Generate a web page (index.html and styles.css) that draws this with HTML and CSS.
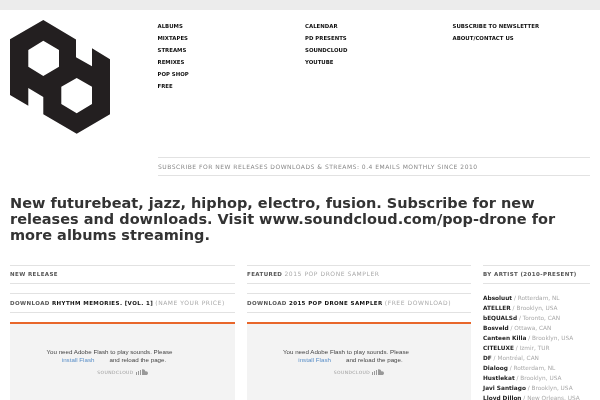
FILE: index.html
```html
<!DOCTYPE html>
<html lang="en">
<head>
<meta charset="utf-8">
<title>Pop Drone</title>
<link rel="stylesheet" href="styles.css">
</head>
<body>
<div class="topbar"></div>
<div class="page">
  <header class="header">
    <svg class="logo" width="100" height="114" viewBox="10 20 100 114" aria-label="Pop Drone logo">
      <path fill="#231f20" fill-rule="evenodd" d="M43.300 20 76 39.500V57.300L92 66.300V48.300L110 59.300V114.300L76.700 133.700 43.300 114.300V97L28.300 88V105.700L10 95V39.300ZM43.300 40.700 28.300 50V66.700L43.300 76 59 66.700V50ZM76.700 78 61.300 86.700V104L76.700 113.300 92 104V86.700Z"/>
    </svg>
    <div class="header-main">
      <nav class="nav">
        <ul class="nav-list">
          <li>ALBUMS</li><li>MIXTAPES</li><li>STREAMS</li><li>REMIXES</li><li>POP SHOP</li><li>FREE</li>
        </ul>
        <ul class="nav-list">
          <li>CALENDAR</li><li>PD PRESENTS</li><li>SOUNDCLOUD</li><li>YOUTUBE</li>
        </ul>
        <ul class="nav-list">
          <li>SUBSCRIBE TO NEWSLETTER</li><li>ABOUT/CONTACT US</li>
        </ul>
      </nav>
      <p class="subscribe">SUBSCRIBE FOR NEW RELEASES DOWNLOADS &amp; STREAMS: 0.4 EMAILS MONTHLY SINCE 2010</p>
    </div>
  </header>
  <h1 class="headline">New futurebeat, jazz, hiphop, electro, fusion. Subscribe for new releases and downloads. Visit www.soundcloud.com/pop-drone for more albums streaming.</h1>
  <main class="columns">
    <section class="col">
      <h2 class="bar"><span class="mid">NEW RELEASE</span></h2>
      <h2 class="bar bar-tall"><span class="mid">DOWNLOAD</span> <b>RHYTHM MEMORIES. [VOL. 1]</b> <span class="soft">(NAME YOUR PRICE)</span></h2>
      <div class="player">
        <p class="flash">You need Adobe Flash to play sounds. Please<br><a class="flash-link">install Flash</a>and reload the page.</p>
        <p class="sc">SOUNDCLOUD
          <svg class="sc-icon" width="12" height="6" viewBox="0 0 12 6"><path fill="#999" d="M0 3h1v3H0zM2 2h1v4H2zM4 1h1v5H4zM6 0.500C8 0 9 1 9.300 2.400 11 2 12 3 12 4.200 12 5.400 11 6 10.500 6H6z"/></svg>
        </p>
      </div>
    </section>
    <section class="col">
      <h2 class="bar"><span class="mid">FEATURED</span> <span class="soft">2015 POP DRONE SAMPLER</span></h2>
      <h2 class="bar bar-tall"><span class="mid">DOWNLOAD</span> <b>2015 POP DRONE SAMPLER</b> <span class="soft">(FREE DOWNLOAD)</span></h2>
      <div class="player">
        <p class="flash">You need Adobe Flash to play sounds. Please<br><a class="flash-link">install Flash</a>and reload the page.</p>
        <p class="sc">SOUNDCLOUD
          <svg class="sc-icon" width="12" height="6" viewBox="0 0 12 6"><path fill="#999" d="M0 3h1v3H0zM2 2h1v4H2zM4 1h1v5H4zM6 0.500C8 0 9 1 9.300 2.400 11 2 12 3 12 4.200 12 5.400 11 6 10.500 6H6z"/></svg>
        </p>
      </div>
    </section>
    <aside class="col">
      <h2 class="bar"><span class="mid">BY ARTIST (2010-PRESENT)</span></h2>
      <ul class="artists">
        <li><b>Absoluut</b> / Rotterdam, NL</li>
        <li><b>ATELLER</b> / Brooklyn, USA</li>
        <li><b>bEQUALSd</b> / Toronto, CAN</li>
        <li><b>Bosveld</b> / Ottawa, CAN</li>
        <li><b>Canteen Killa</b> / Brooklyn, USA</li>
        <li><b>CITELUXE</b> / Izmir, TUR</li>
        <li><b>DF</b> / Montréal, CAN</li>
        <li><b>Dialoog</b> / Rotterdam, NL</li>
        <li><b>Hustlekat</b> / Brooklyn, USA</li>
        <li><b>Javi Santiago</b> / Brooklyn, USA</li>
        <li><b>Lloyd Dillon</b> / New Orleans, USA</li>
      </ul>
    </aside>
  </main>
</div>
</body>
</html>
```
FILE: styles.css
```css
* { box-sizing: border-box; }
html, body { margin: 0; height: 400px; overflow: hidden; background: #fff; }
body { font-family: "DejaVu Sans", sans-serif; color: #222; }
ul, p, h1, h2 { margin: 0; padding: 0; list-style: none; font-weight: normal; }
.topbar { height: 10px; background: #ececec; }
.page { padding: 0 10px; height: 390px; overflow: hidden; filter: blur(0.25px); }
.header { display: flex; height: 166px; padding-top: 10px; }
.logo { display: block; margin-right: 47.500px; flex: none; }
.header-main { flex: 1; display: flex; flex-direction: column; justify-content: space-between; }
.nav { display: grid; grid-template-columns: 147.500px 147.500px 1fr; }
.nav-list { font-size: 5.400px; line-height: 12px; font-weight: bold; color: #111; }
.subscribe { border-top: 1px solid #e2e2e2; border-bottom: 1px solid #e2e2e2; font-size: 6px; line-height: 17px; letter-spacing: 0.500px; color: #888; margin-left: 0.500px; }
.headline { font-size: 14.500px; line-height: 16px; font-weight: bold; color: #333; margin-top: 19px; }
.columns { display: grid; grid-template-columns: 225px 224px 107px; column-gap: 12px; margin-top: 22px; }
.bar { border-top: 1px solid #e2e2e2; border-bottom: 1px solid #e2e2e2; font-size: 5.500px; line-height: 17px; letter-spacing: 0.400px; margin-bottom: 9px; white-space: nowrap; color: #111; }
.bar-tall { line-height: 18px; }
.mid { color: #555; font-weight: bold; line-height: 1; }
.bar b { line-height: 1; }
.soft { color: #aaa; font-size: 6px; letter-spacing: 0.550px; line-height: 1; }
.player { border-top: 2px solid #e8662a; background: #f3f3f3; height: 100px; text-align: center; font-family: "Liberation Sans", sans-serif; }
.flash { font-size: 6.200px; line-height: 8px; color: #444; padding-top: 24px; padding-right: 26px; }
.flash-link { color: #5a8fc8; margin-left: 9px; margin-right: 15px; }
.sc { margin-top: 5px; font-size: 4.500px; letter-spacing: 0.400px; font-family: "DejaVu Sans", sans-serif; color: #999; display: flex; justify-content: center; align-items: center; gap: 2px; }
.artists { font-size: 5.800px; line-height: 10px; color: #aaa; }
.artists b { color: #222; }
```
